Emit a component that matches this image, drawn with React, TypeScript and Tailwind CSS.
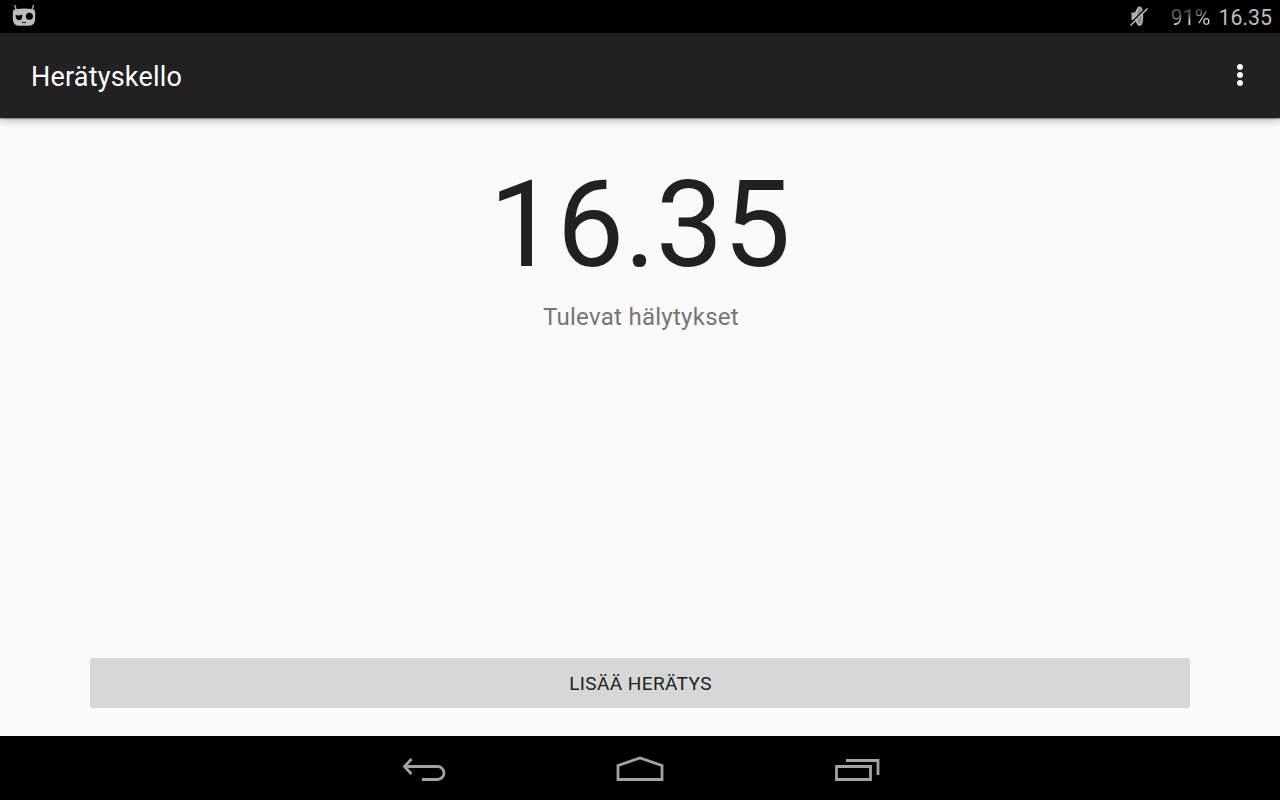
export default function App() {
  return (
    <div className="flex h-[800px] w-[1280px] flex-col overflow-hidden bg-[#fafafa] font-[Roboto,sans-serif]">
      <header className="flex h-[33px] shrink-0 items-center justify-between bg-black pr-2 pl-3">
        <svg className="h-[33px] w-6" viewBox="12 0 24 33" fill="none" aria-hidden="true">
          <path d="M14.8 5.5 L16.3 10 M33.4 5.5 L31.9 10" stroke="#a8a8a8" strokeWidth="1.4" strokeLinecap="round" />
          <path d="M15.5 9.2 Q24 8 32.5 9.2 Q35.2 9.6 35.2 12.5 V19 Q34.8 25.8 29 25.8 H18.6 Q13.2 25.8 12.8 19 V12.5 Q12.8 9.6 15.5 9.2Z" fill="#bdbdbd" />
          <path d="M15.6 15 Q19 16 22.2 14.4 Q22.8 20.2 18.9 20.2 Q15.8 20.2 15.6 15Z" fill="#000" />
          <circle cx="29.4" cy="16.2" r="3.5" fill="#000" />
          <path d="M21.8 22 L23.5 22.6 L26 22.6" stroke="#000" strokeWidth="1" />
        </svg>
        <div className="flex h-full items-center leading-none">
          <svg className="mr-[21px] h-[33px] w-6" viewBox="1126 0 24 33" fill="none" aria-hidden="true">
            <path d="M1131.5 12.5 H1134.5 L1139 6.8 V25.5 L1134.5 20 H1131.5Z" fill="#b0b0b0" />
            <ellipse cx="1139.5" cy="16.2" rx="3" ry="9" fill="#8a8a8a" stroke="#b8b8b8" strokeWidth="1.4" />
            <path d="M1130 24 L1146.5 7.5" stroke="#000" strokeWidth="1.4" />
            <path d="M1130.5 25.5 L1147.5 8.5" stroke="#b4b4b4" strokeWidth="1.6" />
          </svg>
          <span className="mr-2 bg-[linear-gradient(168deg,#575757_40%,#d0d0d0_66%)] bg-clip-text pt-[2px] text-[21.33px] text-transparent">91%</span>
          <span className="pt-[2px] text-[21.33px] text-[#bebebe]">16.35</span>
        </div>
      </header>
      <div className="relative z-10 flex h-[85px] shrink-0 items-center justify-between bg-[#212121] pr-[35px] pb-px pl-[31px] shadow-[0_1px_1px_rgba(0,0,0,0.3),0_2px_8px_rgba(0,0,0,0.28)]">
        <h1 className="pt-[4px] text-[27px] leading-8 tracking-[0.2px] text-white">Herätyskello</h1>
        <svg className="h-[22px] w-[10px]" viewBox="0 0 10 22" fill="#fff" aria-hidden="true">
          <circle cx="5" cy="3" r="2.9" />
          <circle cx="5" cy="11" r="2.9" />
          <circle cx="5" cy="19" r="2.9" />
        </svg>
      </div>
      <main className="flex flex-1 flex-col items-center px-[90px] pt-[37px] pb-7">
        <div className="text-[120px] leading-[141px] text-[#212121]">16.35</div>
        <div className="mt-[7px] pl-[2px] text-[24px] leading-7 tracking-[0.28px] text-[#757575]">Tulevat hälytykset</div>
        <button className="mt-auto h-[50px] w-full rounded-[3px] bg-[#d6d8d7] pt-[2px] pl-px text-[19px] tracking-[0.4px] text-[#212121]">LISÄÄ HERÄTYS</button>
      </main>
      <nav className="flex h-16 shrink-0 items-center bg-black pl-[400px]">
        <svg className="mr-[166px] h-12 w-12" viewBox="400 744 48 48" fill="none" stroke="#a3a3a3" strokeWidth="2.8" aria-hidden="true">
          <path d="M404 766.5 H437.5 A6.5 6.5 0 0 1 437.5 779.5 H422" />
          <path d="M411.5 759 L404.5 766.5 L411.5 774" />
        </svg>
        <svg className="mr-[168px] h-12 w-[52px]" viewBox="614 744 52 48" fill="none" stroke="#a3a3a3" strokeWidth="2.8" aria-hidden="true">
          <path d="M618 779.5 V765.5 L640 758 L662 765.5 V779.5Z" />
        </svg>
        <svg className="h-12 w-12" viewBox="834 744 48 48" fill="none" stroke="#a3a3a3" strokeWidth="2.8" aria-hidden="true">
          <path d="M836.5 766.5 H870.5 V779.5 H836.5Z M846 760.5 H878 V775" />
        </svg>
      </nav>
    </div>
  );
}
